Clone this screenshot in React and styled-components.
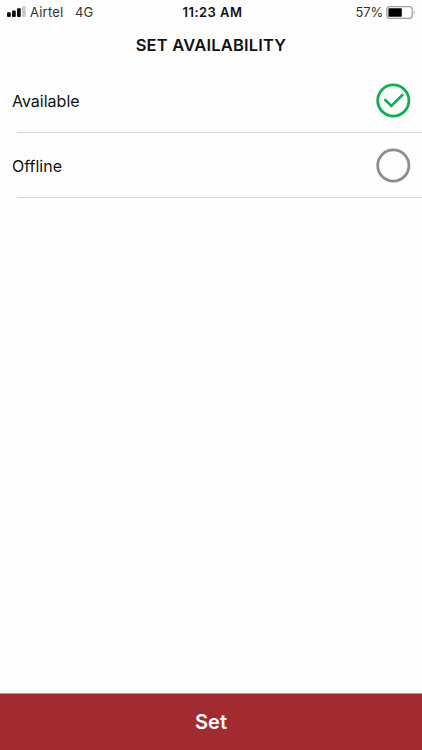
import React, { useState } from 'react';
import styled, { createGlobalStyle } from 'styled-components';

const GlobalStyle = createGlobalStyle`
  * {
    box-sizing: border-box;
  }

  body {
    margin: 0;
    background: #fefefe;
    color: #111;
    font-family: Inter, "Liberation Sans", sans-serif;
  }
`;

const Screen = styled.div`
  display: flex;
  flex-direction: column;
  height: 100vh;
  overflow: hidden;
`;

const StatusBar = styled.div`
  display: grid;
  grid-template-columns: 1fr auto 1fr;
  align-items: center;
  height: 24px;
  padding: 0 6px 0 7px;
  font-size: 13px;
  line-height: 24px;
  white-space: nowrap;
`;

const Carrier = styled.div`
  display: flex;
  align-items: center;
  color: #333;

  svg {
    margin-right: 4px;
  }
`;

const CarrierName = styled.span`
  width: 45px;
  letter-spacing: 0.2px;
`;

const Clock = styled.div`
  padding-left: 2px;
  font-weight: 600;
  letter-spacing: 0.45px;
`;

const Battery = styled.div`
  display: flex;
  align-items: center;
  justify-content: flex-end;
  gap: 3px;
  color: #333;
  letter-spacing: -0.2px;
`;

const Title = styled.h1`
  height: 44px;
  margin: 0;
  font-size: 16.5px;
  font-weight: 600;
  line-height: 43px;
  text-align: center;
  letter-spacing: 0.2px;
`;

const Options = styled.div`
  flex: 1;
`;

const Option = styled.div`
  display: flex;
  align-items: center;
  justify-content: space-between;
  height: 64px;
  padding: 0 11px 0 12px;
  font-size: 16px;
  cursor: pointer;
`;

const OptionName = styled.span`
  padding-top: 1px;
`;

const Divider = styled.div`
  height: 1px;
  margin-left: 17px;
  background: #d6d6da;
`;

const SetButton = styled.button`
  height: 57px;
  padding: 0;
  border: 0;
  border-top: 1px solid #c98a8d;
  background: #a22b31;
  color: #fff;
  font-family: inherit;
  font-size: 20px;
  font-weight: 600;
  line-height: 56px;
`;

const SignalIcon = () => (
  <svg width="19" height="12" viewBox="0 0 19 12">
    <rect x="0" y="6.3" width="3.8" height="4.7" rx="0.9" fill="#111" />
    <rect x="5" y="4.5" width="3.8" height="6.5" rx="0.9" fill="#111" />
    <rect x="10" y="2.3" width="3.8" height="8.7" rx="0.9" fill="#111" />
    <rect x="15" y="0.2" width="3.8" height="10.8" rx="0.9" fill="#c9c9c9" />
  </svg>
);

const BatteryIcon = () => (
  <svg width="30" height="13" viewBox="0 0 30 13">
    <rect x="0.8" y="0.7" width="25.4" height="11.6" rx="2.8" fill="none" stroke="#a0a0a0" strokeWidth="1.3" />
    <rect x="2.4" y="2.2" width="13.4" height="8.6" rx="0.8" fill="#000" />
    <path d="M27.8 4.5q1.9 2 0 4z" fill="#929292" />
  </svg>
);

const RadioIcon = ({ checked }) => (
  <svg width="35" height="35" viewBox="0 0 35 35" fill="none">
    <circle cx="17.3" cy="17.5" r="15.6" stroke={checked ? '#13ad59' : '#8d8d8d'} strokeWidth="2.8" />
    {checked && (
      <path d="M9.3 17l6 6L26.4 12" stroke="#13ad59" strokeWidth="2.6" strokeLinecap="round" />
    )}
  </svg>
);

const options = ['Available', 'Offline'];

const App = () => {
  const [selected, setSelected] = useState('Available');

  return (
    <Screen>
      <GlobalStyle />
      <StatusBar>
        <Carrier>
          <SignalIcon />
          <CarrierName>Airtel</CarrierName>
          <span>4G</span>
        </Carrier>
        <Clock>11:23 AM</Clock>
        <Battery>
          <span>57%</span>
          <BatteryIcon />
        </Battery>
      </StatusBar>
      <Title>SET AVAILABILITY</Title>
      <Options>
        {options.map(option => (
          <div key={option}>
            <Option onClick={() => setSelected(option)}>
              <OptionName>{option}</OptionName>
              <RadioIcon checked={selected === option} />
            </Option>
            <Divider />
          </div>
        ))}
      </Options>
      <SetButton>Set</SetButton>
    </Screen>
  );
};

export default App;
